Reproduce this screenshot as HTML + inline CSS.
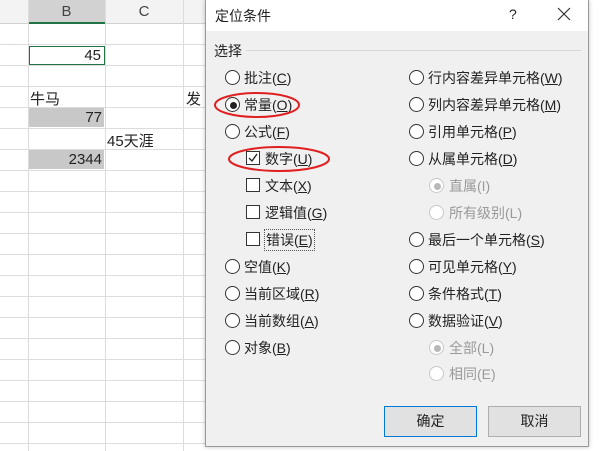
<!DOCTYPE html>
<html><head><meta charset="utf-8"><style>
*{margin:0;padding:0;box-sizing:border-box}
body{width:600px;height:451px;overflow:hidden;position:relative;background:#fff;font-family:"Liberation Sans","Noto Sans CJK SC",sans-serif;font-size:14px;color:#222}
.grid{position:absolute;left:0;top:24px;width:210px;height:427px;
background-image:repeating-linear-gradient(to bottom,transparent 0,transparent 20px,#dcdcdc 20px,#dcdcdc 21px);}
.vl{position:absolute;top:0;width:1px;height:451px;background:#dcdcdc}
.hdr{position:absolute;top:0;left:0;width:210px;height:24px;background:#f3f3f3;border-bottom:1px solid #d0d0d0}
.a{position:absolute;white-space:nowrap}
.dlg{position:absolute;left:205px;top:0;width:384px;height:447px;background:#f0f0f0;border:1px solid #9a9a9a;border-top:none;box-shadow:0 0 4px rgba(0,0,0,.25)}
.title{position:absolute;left:0;top:0;width:100%;height:31px;background:#fff}
.r{position:absolute;width:15px;height:15px;border:1px solid #333;border-radius:50%;background:#fff}
.r.d{border-color:#c8c8c8}
.c{position:absolute;width:14px;height:14px;border:1px solid #333;background:#fff}
.g{color:#9a9a9a}
.btn{position:absolute;width:93px;height:31px;border:1px solid #adadad;background:#e1e1e1;text-align:center;line-height:29px}
u{text-decoration:underline}
</style></head><body>
<div class="hdr"></div>
<div class="a" style="left:28px;top:0;width:77px;height:24px;background:#d2d2d2;border-bottom:2px solid #217346;text-align:center;line-height:24px;color:#444;font-size:15px">B</div>
<div class="a" style="left:105px;top:0;width:78px;height:24px;text-align:center;line-height:24px;color:#444;font-size:15px">C</div>
<div class="grid"></div>
<div class="vl" style="left:28px"></div><div class="vl" style="left:105px"></div><div class="vl" style="left:183px"></div>
<div class="a" style="left:29px;top:46px;width:76px;height:19px;border:1px solid #217346;background:#fff;text-align:right;padding-right:3px;line-height:17px;font-size:15px">45</div>
<div class="a" style="left:30px;top:88px;font-size:15px">牛马</div>
<div class="a" style="left:186px;top:88px;font-size:15px">发</div>
<div class="a" style="left:29px;top:108px;width:75px;height:19px;background:#c8c8c8;text-align:right;padding-right:2px;line-height:19px;font-size:15px">77</div>
<div class="a" style="left:107px;top:130px;font-size:15px">45天涯</div>
<div class="a" style="left:29px;top:150px;width:75px;height:19px;background:#c8c8c8;text-align:right;padding-right:2px;line-height:19px;font-size:15px">2344</div>

<div class="dlg">
<div class="title"></div>
<div class="a" style="left:9px;top:6px">定位条件</div>
<div class="a" style="left:303px;top:6px">?</div>
<svg class="a" style="left:351px;top:7px" width="14" height="14"><path d="M1 1L13 13M13 1L1 13" stroke="#333" stroke-width="1.2"/></svg>
<div class="a" style="left:8px;top:41px">选择</div>
<div class="a" style="left:40px;top:50px;width:336px;height:1px;background:#d8d8d8"></div>

<div class="r" style="left:19px;top:70px"></div><div class="a" style="left:38px;top:68px">批注(<u>C</u>)</div>
<div class="r" style="left:19px;top:97px"></div><div class="a" style="left:24px;top:102px;width:7px;height:7px;border-radius:50%;background:#222"></div><div class="a" style="left:38px;top:95px">常量(<u>O</u>)</div>
<div class="r" style="left:19px;top:124px"></div><div class="a" style="left:38px;top:122px">公式(<u>F</u>)</div>
<div class="c" style="left:40px;top:151px"></div><svg class="a" style="left:41px;top:152px" width="12" height="12"><path d="M2 6L5 9L10 2" stroke="#222" stroke-width="1.3" fill="none"/></svg><div class="a" style="left:59px;top:149px">数字(<u>U</u>)</div>
<div class="c" style="left:40px;top:178px"></div><div class="a" style="left:59px;top:176px">文本(<u>X</u>)</div>
<div class="c" style="left:40px;top:205px"></div><div class="a" style="left:59px;top:203px">逻辑值(<u>G</u>)</div>
<div class="c" style="left:40px;top:232px"></div><div class="a" style="left:58px;top:229px;border:1px dotted #555;padding:0 1px">错误(<u>E</u>)</div>
<div class="r" style="left:19px;top:259px"></div><div class="a" style="left:38px;top:257px">空值(<u>K</u>)</div>
<div class="r" style="left:19px;top:286px"></div><div class="a" style="left:38px;top:284px">当前区域(<u>R</u>)</div>
<div class="r" style="left:19px;top:313px"></div><div class="a" style="left:38px;top:311px">当前数组(<u>A</u>)</div>
<div class="r" style="left:19px;top:340px"></div><div class="a" style="left:38px;top:338px">对象(<u>B</u>)</div>

<div class="r" style="left:203px;top:70px"></div><div class="a" style="left:222px;top:68px">行内容差异单元格(<u>W</u>)</div>
<div class="r" style="left:203px;top:97px"></div><div class="a" style="left:222px;top:95px">列内容差异单元格(<u>M</u>)</div>
<div class="r" style="left:203px;top:124px"></div><div class="a" style="left:222px;top:122px">引用单元格(<u>P</u>)</div>
<div class="r" style="left:203px;top:151px"></div><div class="a" style="left:222px;top:149px">从属单元格(<u>D</u>)</div>
<div class="r d" style="left:223px;top:178px"></div><div class="a" style="left:228px;top:183px;width:7px;height:7px;border-radius:50%;background:#b8b8b8"></div><div class="a g" style="left:243px;top:176px">直属(I)</div>
<div class="r d" style="left:223px;top:205px"></div><div class="a g" style="left:243px;top:203px">所有级别(L)</div>
<div class="r" style="left:203px;top:232px"></div><div class="a" style="left:222px;top:230px">最后一个单元格(<u>S</u>)</div>
<div class="r" style="left:203px;top:259px"></div><div class="a" style="left:222px;top:257px">可见单元格(<u>Y</u>)</div>
<div class="r" style="left:203px;top:286px"></div><div class="a" style="left:222px;top:284px">条件格式(<u>T</u>)</div>
<div class="r" style="left:203px;top:313px"></div><div class="a" style="left:222px;top:311px">数据验证(<u>V</u>)</div>
<div class="r d" style="left:223px;top:340px"></div><div class="a" style="left:228px;top:345px;width:7px;height:7px;border-radius:50%;background:#b8b8b8"></div><div class="a g" style="left:243px;top:338px">全部(L)</div>
<div class="r d" style="left:223px;top:366px"></div><div class="a g" style="left:243px;top:364px">相同(E)</div>

<div class="btn" style="left:178px;top:406px;border:1px solid #0078d7">确定</div>
<div class="btn" style="left:282px;top:406px">取消</div>
</div>
<svg class="a" style="left:0;top:0" width="600" height="451">
<ellipse cx="257" cy="105" rx="42" ry="12" fill="none" stroke="#e02020" stroke-width="2"/>
<ellipse cx="279" cy="159" rx="50" ry="12" fill="none" stroke="#e02020" stroke-width="2"/>
</svg>
</body></html>
